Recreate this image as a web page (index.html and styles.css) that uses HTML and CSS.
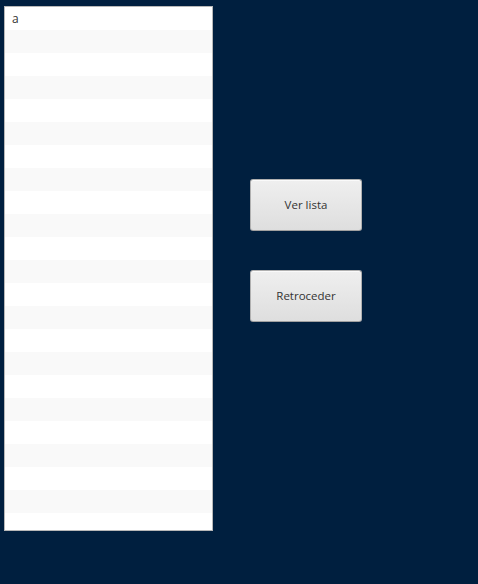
FILE: index.html
```html
<!DOCTYPE html>
<html lang="es">
<head>
<meta charset="utf-8">
<title>Lista</title>
<link rel="stylesheet" href="styles.css">
</head>
<body>
<div class="stage">
  <div class="list">
    <div class="cell">a</div>
    <div class="cell"></div><div class="cell"></div><div class="cell"></div>
    <div class="cell"></div><div class="cell"></div><div class="cell"></div>
    <div class="cell"></div><div class="cell"></div><div class="cell"></div>
    <div class="cell"></div><div class="cell"></div><div class="cell"></div>
    <div class="cell"></div><div class="cell"></div><div class="cell"></div>
    <div class="cell"></div><div class="cell"></div><div class="cell"></div>
    <div class="cell"></div><div class="cell"></div><div class="cell"></div>
    <div class="cell"></div>
  </div>
  <div class="actions">
    <button class="btn" type="button">Ver lista</button>
    <button class="btn" type="button">Retroceder</button>
  </div>
</div>
</body>
</html>
```

FILE: styles.css
```css
html, body {
  margin: 0;
  padding: 0;
  height: 100%;
  background: #001f3f;
}
body {
  font-family: "Open Sans", "Noto Sans", sans-serif;
  font-size: 12px;
  color: #333333;
}
.stage {
  display: flex;
  align-items: flex-start;
  padding: 6px 0 0 4px;
  gap: 37px;
}
.list {
  width: 207px;
  height: 523px;
  border: 1px solid #b8b8b8;
  background: #ffffff;
  overflow: hidden;
  display: flex;
  flex-direction: column;
}
.cell {
  flex: 0 0 23px;
  height: 23px;
  box-sizing: border-box;
  padding: 1px 7px 0;
  line-height: 22px;
  background: #ffffff;
}
.cell:nth-child(even) {
  background: #f9f9f9;
}
.actions {
  display: flex;
  flex-direction: column;
  gap: 39px;
  padding-top: 173px;
}
.btn {
  width: 112px;
  height: 52px;
  box-sizing: border-box;
  border: 1px solid #b0b0b0;
  border-bottom-color: #a0a0a0;
  border-radius: 3px;
  background: linear-gradient(#efefef, #dedede);
  box-shadow: inset 0 1px 0 #fafafa;
  font-family: "Open Sans", "Noto Sans", sans-serif;
  font-size: 11.5px;
  color: #333333;
  padding: 0 0 2px;
  cursor: default;
}
```
